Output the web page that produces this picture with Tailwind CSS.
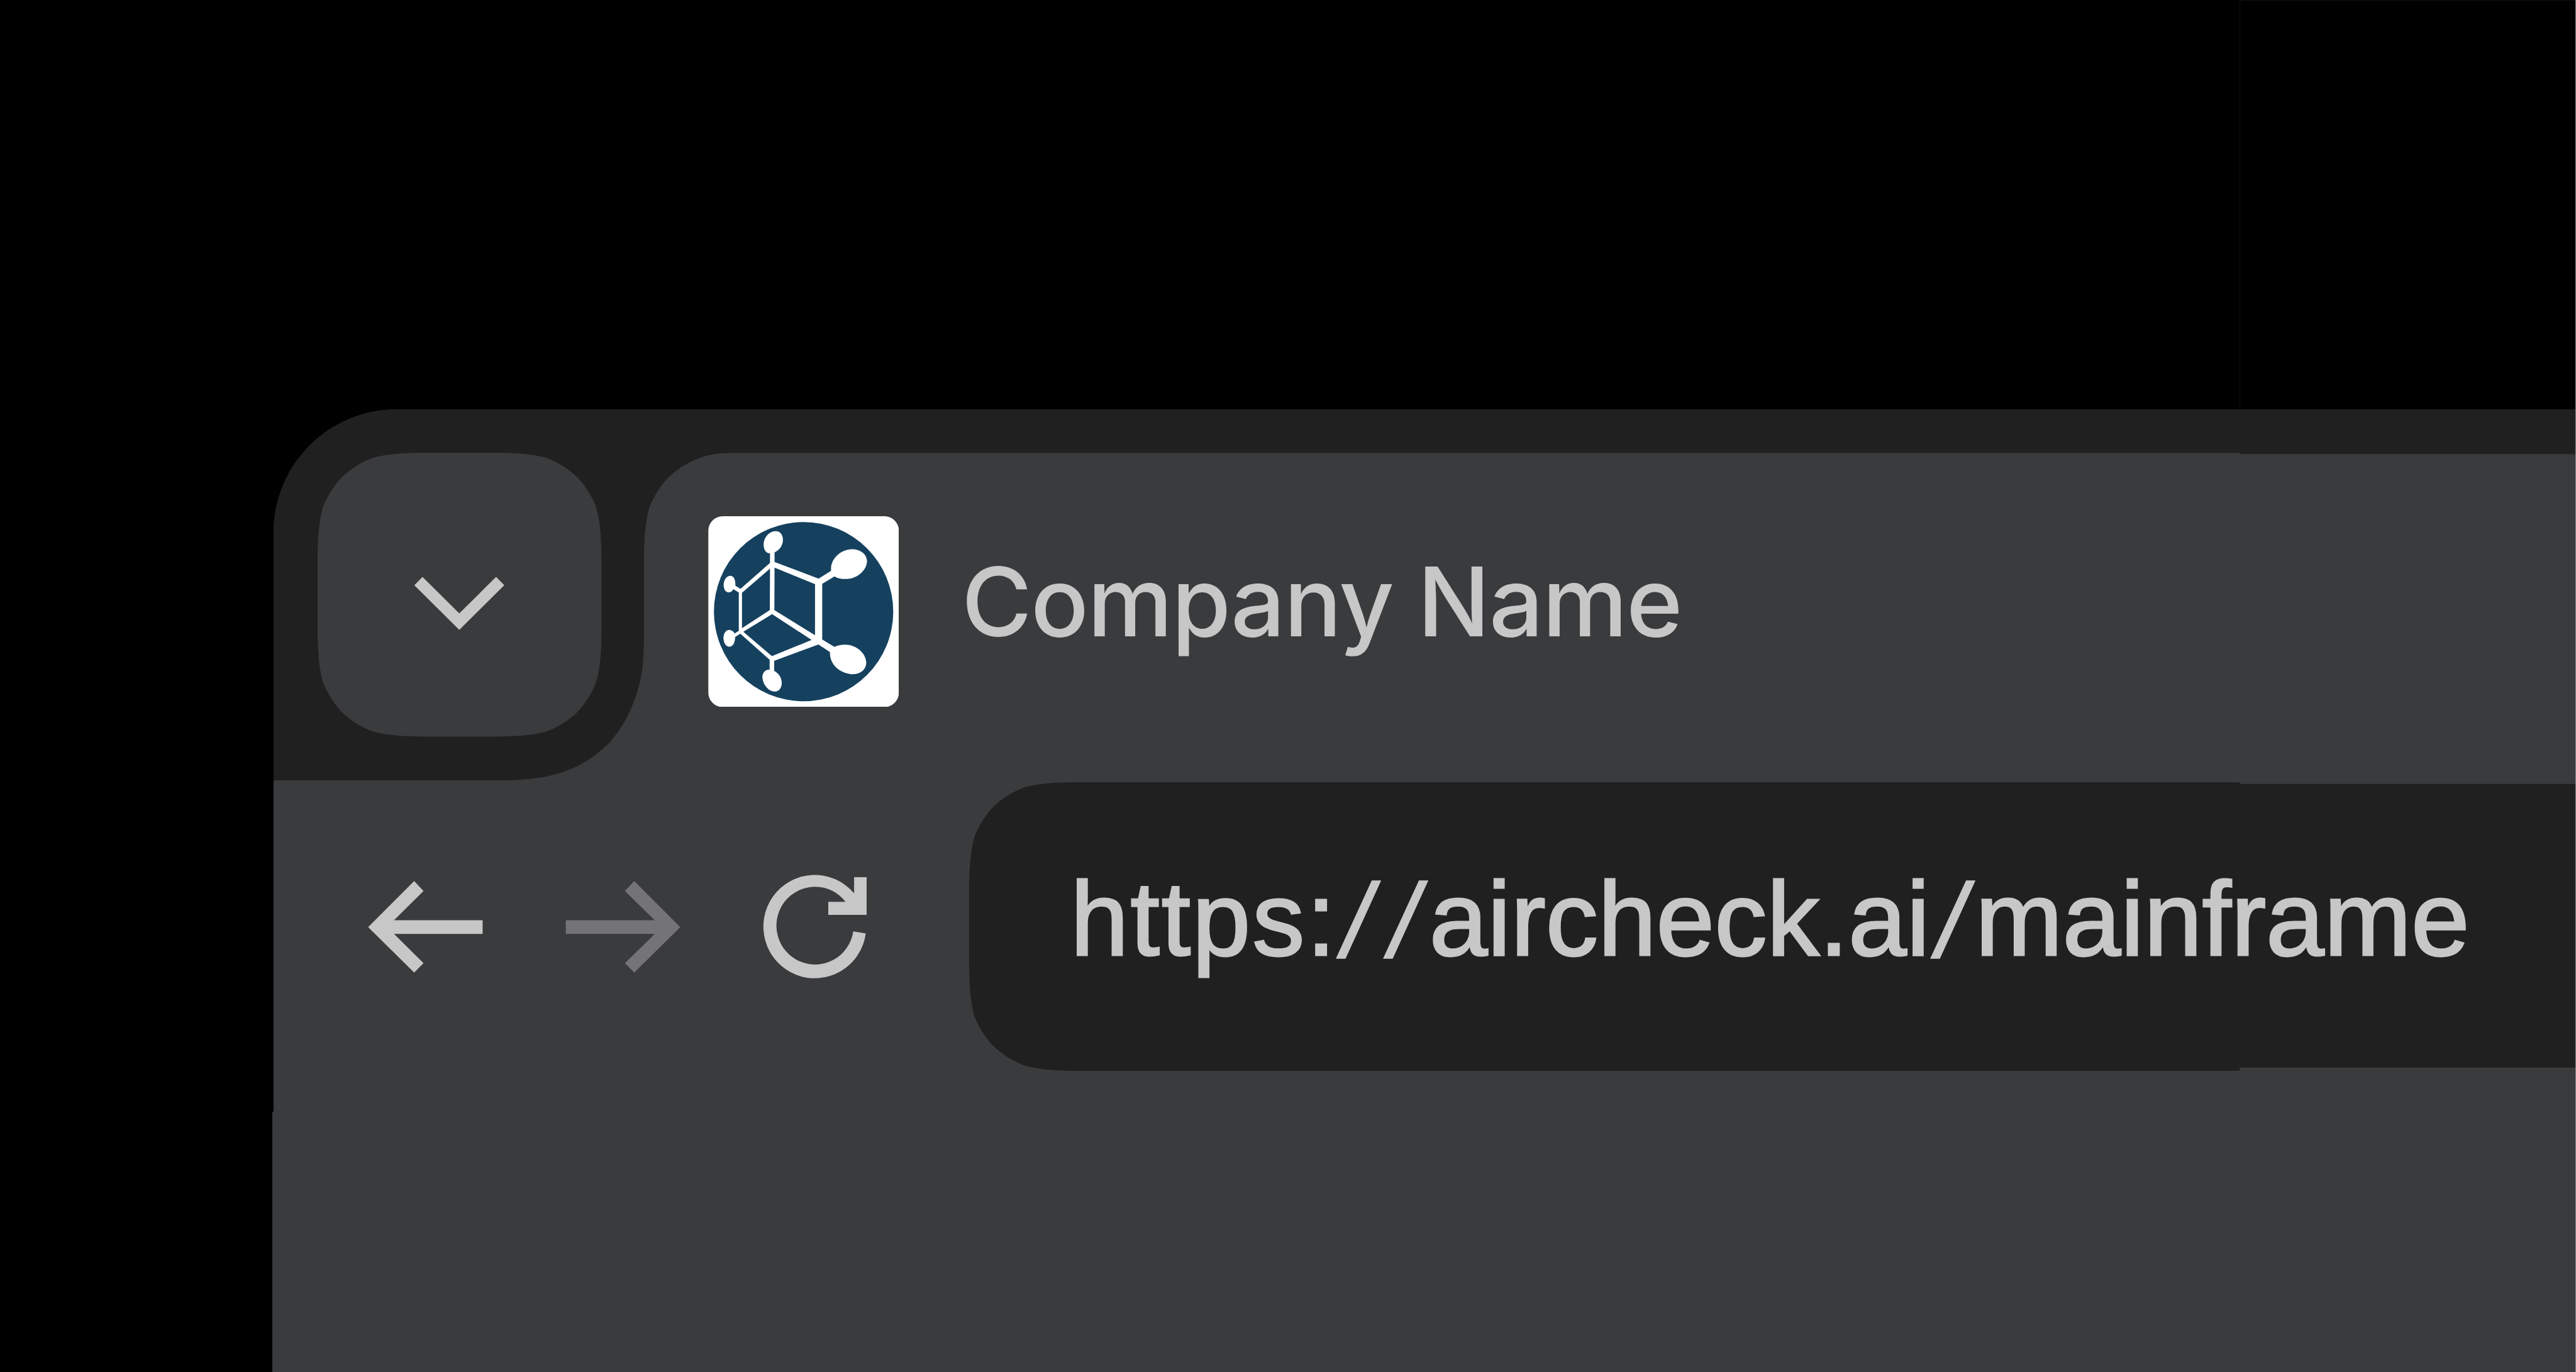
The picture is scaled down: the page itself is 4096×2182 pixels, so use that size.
<!DOCTYPE html>
<html lang="en">
<head>
    <meta charset="UTF-8">
    <meta name="viewport" content="width=device-width, initial-scale=1.0">
    <title>Company Name</title>
    <script src="https://cdn.jsdelivr.net/npm/@tailwindcss/browser@4"></script>
</head>
<body class="bg-black h-[2182px] overflow-hidden pt-[650.5px] pl-[435px]">
    <div class="relative h-[1532px] bg-[#3a3b3d] rounded-tl-[196px]">
        <!-- Tab strip -->
        <header class="relative h-[590.5px] bg-[#202020] rounded-tl-[196px] overflow-hidden">
            <svg class="absolute inset-0 w-full h-full" viewBox="0 0 4052.5 653.6" preserveAspectRatio="none" fill="#3a3b3d">
                <path d="M4053 79H3461V77H802C783 77 762 80.5 745 87.5C727 95 708 107 695 120C682 133 670 152 662.5 170C654.5 192 652 232 652 267V384C652 430 650 465 643.5 485C633 526 615 560 590 588C560 617 530 634 490 644C470 650 430 653.6 382 653.6H4053Z"/>
            </svg>
            <div class="relative flex pt-[69.5px] pl-[70px]">
                <button type="button" class="block w-[451.5px] h-[451.5px]">
                    <svg class="block w-full h-full" viewBox="0 0 500 500">
                        <path fill="#3a3b3d" d="M190 0C155 0 115 2.500 93 10.500C75 18 56 30 43 43C30 56 18 75 10.500 93C2.500 115 0 155 0 190V310C0 345 2.500 385 10.500 407C18 425 30 444 43 457C56 470 75 482 93 489.500C115 497.500 155 500 190 500H310C345 500 385 497.500 407 489.500C425 482 444 470 457 457C470 444 482 425 489.500 407C497.500 385 500 345 500 310V190C500 155 497.500 115 489.500 93C482 75 470 56 457 43C444 30 425 18 407 10.500C385 2.500 345 0 310 0Z"/>
                        <path fill="none" stroke="#c7c7c7" stroke-width="20.500" d="M177.500 226L249.500 297.500L321.500 226"/>
                    </svg>
                </button>
                <div class="flex items-start pt-[100.500px] pl-[169px]">
                    <!-- Favicon -->
                    <svg class="block w-[303.500px] h-[303.500px]" viewBox="79 84 1007 1009">
                        <rect x="79" y="84" width="1007" height="1009" rx="76" fill="#fff"/>
                        <circle cx="582.500" cy="588.500" r="474" fill="#15415f"/>
                        <g fill="#fff">
                            <path d="M372 222C378 188 405 163 436 163C464 163 478 192 472 222C467 247 450 266 429 275V326L662 414L728 372C722 320 764 268 826 259C878 254 918 282 918 324C914 374 862 416 805 416C782 416 762 412 746 402L681 441V736L745 775C768 764 796 760 824 765C875 777 914 815 914 862C910 903 874 922 832 919C771 912 719 866 722 802L661 762L427 849V902C448 912 465 934 467 961C468 992 453 1011 428 1011C399 1009 369 978 365 939C363 911 380 894 403 895V843L248 705L221 722C220 751 210 774 190 774C170 773 158 749 159 724C161 700 174 685 190 685C203 686 214 695 218 704L240 690V487L211 470C205 482 196 487 186 487C168 486 159 466 160 443C162 418 177 399 195 399C216 400 223 423 222 451L249 468L405 331V281C380 280 368 254 372 222Z"/>
                        </g>
                        <g fill="#15415f">
                            <path d="M405 361L257 489V676L404 580Z"/>
                            <path d="M429 356L643 443V713L428 580Z"/>
                            <path d="M416 602L625 738L415 824L264 695Z"/>
                        </g>
                    </svg>
                    <span class="pt-[56px] pl-[100px] font-['Inter'] font-medium text-[152.500px] leading-[160px] tracking-[-1.800px] text-[#c7c7c7] whitespace-nowrap">Company Name</span>
                </div>
            </div>
        </header>

        <!-- Toolbar -->
        <div class="relative flex pt-[2.500px]">
            <svg class="block w-[1106px] h-[460px] shrink-0" viewBox="481.500 1376.500 1224.500 509" fill="none">
                <path fill="#c7c7c7" d="M648 1631.500L729 1550.500L745.500 1568L693.500 1619.500H849.500V1643.500H693.500L745.500 1695L729 1711.500Z"/>
                <path fill="#747476" d="M1197.500 1631.500L1116.500 1550.500L1100 1568L1152.500 1619.500H996V1643.500H1152.500L1100 1695L1116.500 1711.500Z"/>
                <path fill="#c7c7c7" d="M1524 1642.500A90.500 91 0 1 1 1503.500 1572V1543.500H1525.500V1610H1458V1587H1488.500A68 68.500 0 1 0 1502 1639Z"/>
            </svg>
            <div class="relative grow h-[459px]">
                <svg class="absolute inset-0 w-full h-full" viewBox="0 0 2828 508.400" preserveAspectRatio="none" fill="#202020">
                    <path d="M2828 3H2236V0H190C155 0 115 2.500 93 10.500C75 18 56 30 43 43C30 56 18 75 10.500 93C2.500 115 0 155 0 190V318C0 353 2.500 393 10.500 415C18 433 30 452 43 465C56 478 75 490 93 497.500C115 505.500 155 508.400 190 508.400H2236V502.500H2828Z"/>
                </svg>
                <div class="relative flex pt-[122.500px] pl-[161px] font-['Liberation_Sans'] text-[166.500px] leading-[190px] text-[#c7c7c7] whitespace-nowrap [-webkit-text-stroke:3px_#c7c7c7]">
                    <span class="tracking-[2.900px]">https:</span>
                    <span class="w-[75px] ml-[10px] pt-[3px] -skew-x-[10.5deg] [-webkit-text-stroke:2px_#c7c7c7]">/</span>
                    <span class="w-[61px] pt-[3px] -skew-x-[10.5deg] [-webkit-text-stroke:2px_#c7c7c7]">/</span>
                    <span>aircheck.ai</span>
                    <span class="w-[58.500px] ml-[14px] pt-[3px] -skew-x-[10.5deg] [-webkit-text-stroke:2px_#c7c7c7]">/</span>
                    <span class="tracking-[-0.100px]">mainframe</span>
                </div>
            </div>
        </div>

        <!-- Lower pane sits slightly wider than the toolbar -->
        <div class="absolute left-[-2px] top-[1117px] bottom-0 w-[2px] bg-[#3a3b3d]"></div>
    </div>
    <!-- Hairlines of the right-hand panel -->
    <div class="absolute top-0 left-[3561px] right-0 h-[650px] border-t border-l border-[#0e0e0e]"></div>
    <div class="absolute inset-y-0 right-0 w-px bg-[#8f918f]"></div>
</body>
</html>
